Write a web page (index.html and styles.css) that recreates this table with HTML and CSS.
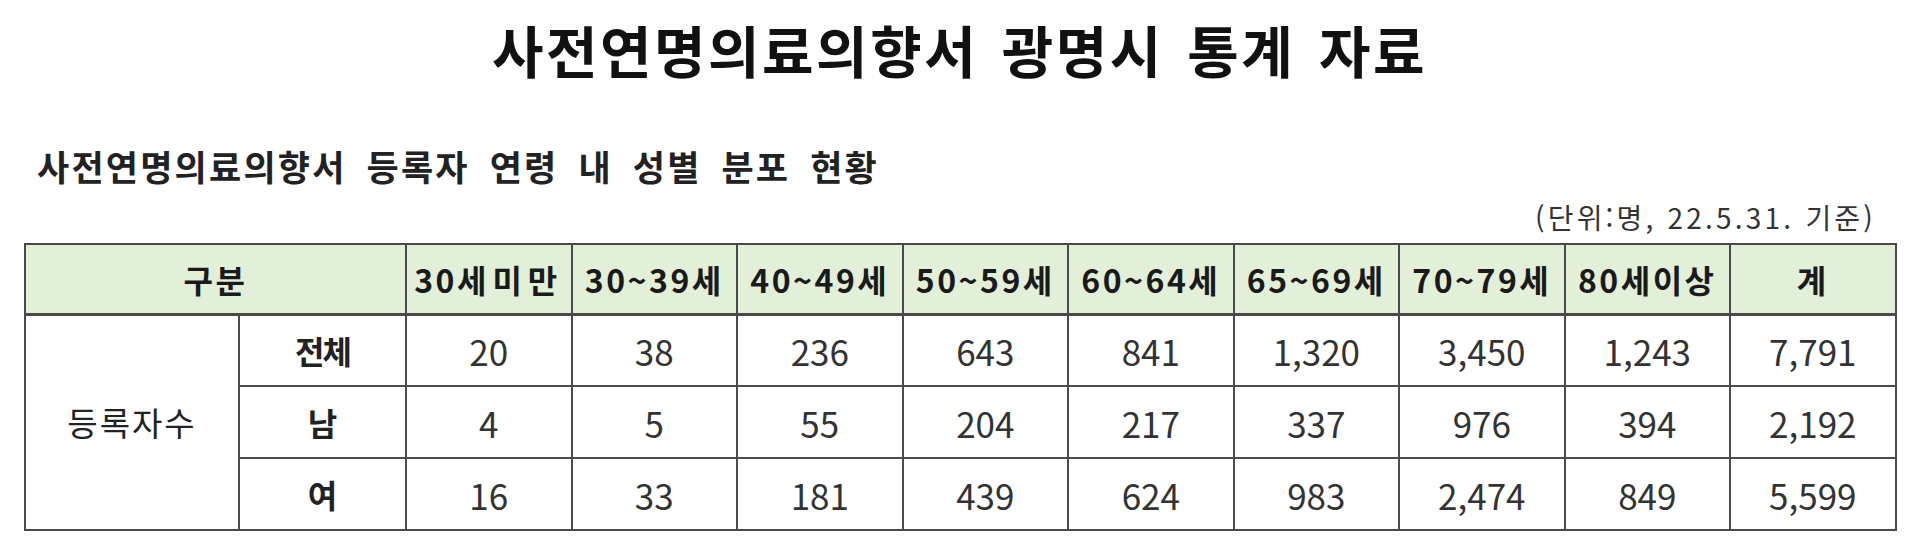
FILE: index.html
```html
<!DOCTYPE html>
<html lang="ko">
<head>
<meta charset="utf-8">
<title>사전연명의료의향서 광명시 통계 자료</title>
<link rel="stylesheet" href="styles.css">
</head>
<body>
<div class="page">
  <h1 class="title">사전연명의료의향서 광명시 통계 자료</h1>
  <h2 class="subtitle">사전연명의료의향서 등록자 연령 내 성별 분포 현황</h2>
  <p class="unit">(단위:명, 22.5.31. 기준)</p>
  <table class="stats">
    <colgroup>
      <col class="c-group">
      <col class="c-sub">
      <col class="c-num"><col class="c-num"><col class="c-num"><col class="c-num"><col class="c-num">
      <col class="c-num"><col class="c-num"><col class="c-num"><col class="c-num">
    </colgroup>
    <thead>
      <tr>
        <th colspan="2">구분</th>
        <th>30<span class="spread">세미만</span></th>
        <th>30~39세</th>
        <th>40~49세</th>
        <th>50~59세</th>
        <th>60~64세</th>
        <th>65~69세</th>
        <th>70~79세</th>
        <th>80세이상</th>
        <th>계</th>
      </tr>
    </thead>
    <tbody>
      <tr>
        <td rowspan="3" class="group">등록자수</td>
        <td class="sub tight">전체</td>
        <td>20</td><td>38</td><td>236</td><td>643</td><td>841</td><td>1,320</td><td>3,450</td><td>1,243</td><td>7,791</td>
      </tr>
      <tr>
        <td class="sub">남</td>
        <td>4</td><td>5</td><td>55</td><td>204</td><td>217</td><td>337</td><td>976</td><td>394</td><td>2,192</td>
      </tr>
      <tr>
        <td class="sub">여</td>
        <td>16</td><td>33</td><td>181</td><td>439</td><td>624</td><td>983</td><td>2,474</td><td>849</td><td>5,599</td>
      </tr>
    </tbody>
  </table>
</div>
</body>
</html>
```

FILE: styles.css
```css
* { box-sizing: border-box; }

html, body {
  margin: 0;
  padding: 0;
  background: #ffffff;
}

body {
  font-family: "Noto Sans CJK KR", "Noto Sans", sans-serif;
  color: #1a1a1a;
}

.page {
  width: 1920px;
  height: 540px;
  padding: 0 25px 0 24px;
  overflow: hidden;
}

.title {
  width: 935px;
  height: 86px;
  margin: 0 auto;
  padding-top: 14px;
  font-size: 56px;
  line-height: 70px;
  font-weight: 700;
  letter-spacing: 2.5px;
  text-align: justify;
  text-align-last: justify;
  color: #111;
}

.subtitle {
  width: 855px;
  height: 104px;
  margin: 0;
  padding-top: 60px;
  padding-left: 13px;
  font-size: 35px;
  line-height: 40px;
  font-weight: 700;
  letter-spacing: 2.2px;
  text-align: justify;
  text-align-last: justify;
  color: #222;
}

.unit {
  height: 53px;
  margin: 0;
  padding-top: 10px;
  padding-right: 19px;
  font-size: 28px;
  line-height: 34px;
  text-align: right;
  letter-spacing: 3.2px;
  color: #333;
}

.stats {
  width: 1871px;
  border-collapse: collapse;
  table-layout: fixed;
  border: 2px solid #4a4a4a;
}

.c-group { width: 214px; }
.c-sub { width: 167px; }
.c-num { width: 165.5px; }

.stats th,
.stats td {
  border: 2px solid #4a4a4a;
  text-align: center;
  vertical-align: middle;
  padding: 0;
}

.stats thead th {
  height: 70px;
  background: #e2efd9;
  font-size: 32px;
  font-weight: 700;
  letter-spacing: 2.5px;
  color: #1a1a1a;
  border-bottom-width: 3px;
}

.stats thead th .spread {
  letter-spacing: 6px;
}

.stats tbody td {
  height: 72px;
  font-size: 35px;
  font-weight: 400;
  color: #333;
}

.stats tbody td.group {
  font-size: 33px;
  letter-spacing: 2px;
  color: #222;
}

.stats tbody td.sub {
  font-size: 32px;
  font-weight: 700;
  color: #222;
}

.stats tbody td.tight {
  letter-spacing: -2px;
}
```
